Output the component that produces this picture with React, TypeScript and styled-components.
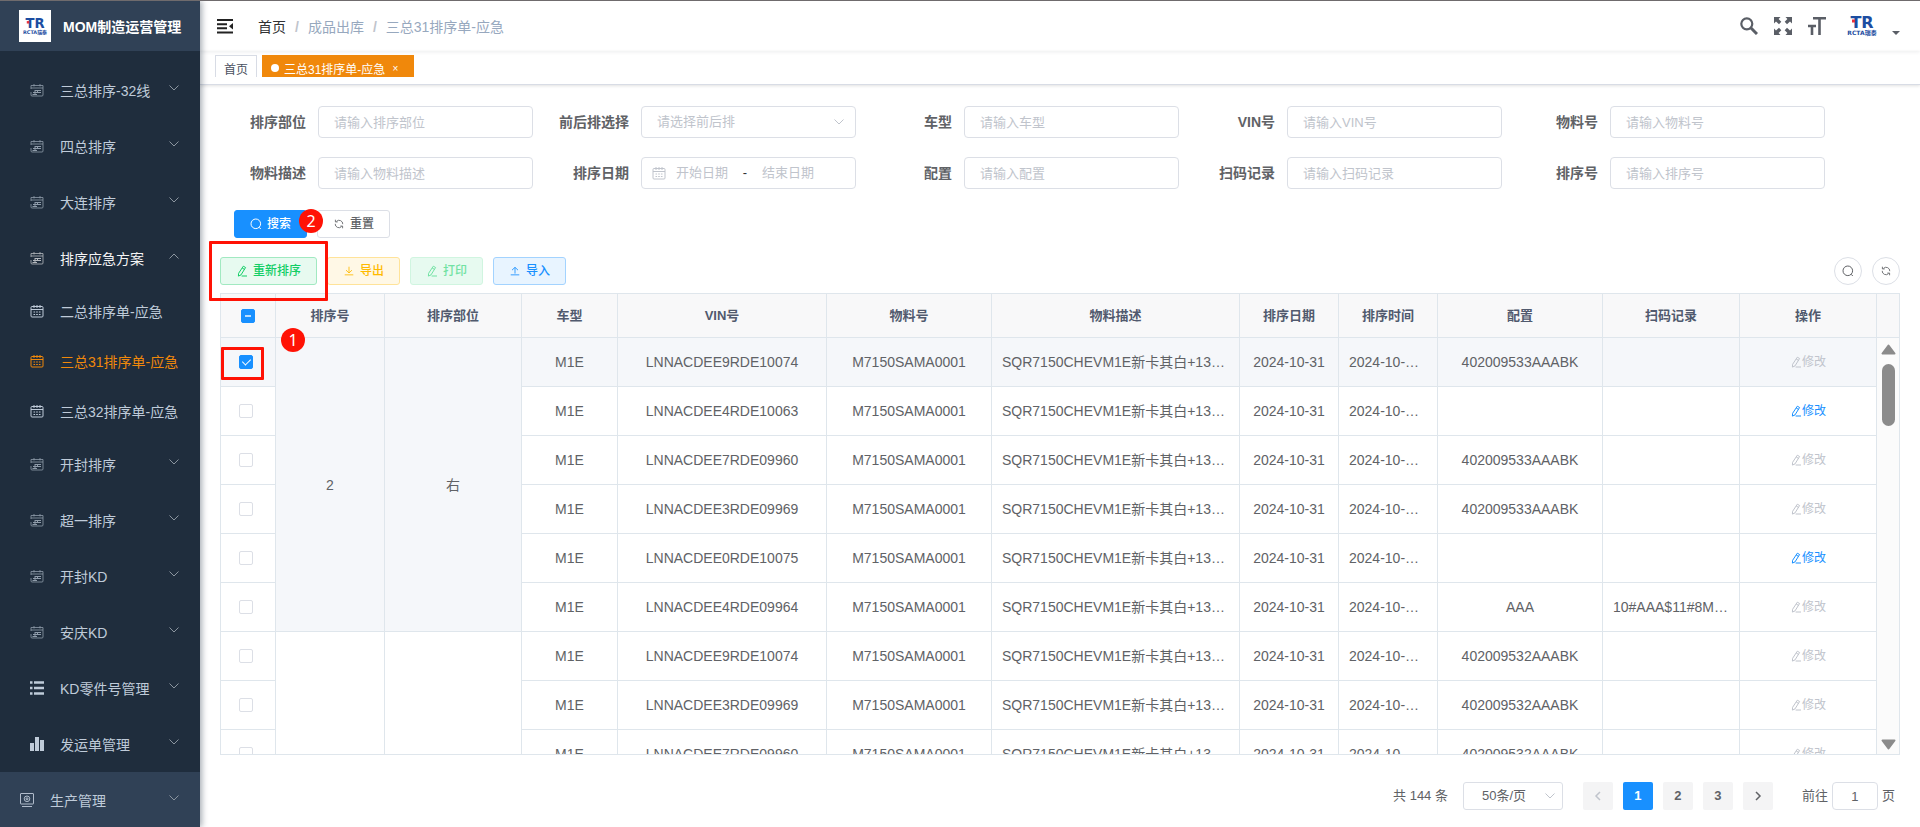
import React from 'react';
import styled, { createGlobalStyle, css } from 'styled-components';

const GlobalStyle = createGlobalStyle`
  *, *::before, *::after { box-sizing: border-box; }
  body {
    margin: 0;
    background: #fff;
    color: #606266;
    font-family: "Liberation Sans", "Noto Sans CJK SC", sans-serif;
    font-size: 14px;
  }
  button, input, select { font-family: inherit; line-height: inherit; margin: 0; }
  a { color: inherit; text-decoration: none; }
`;

/* ---------- icons ---------- */

const Svg = styled.svg<{ $size?: number }>`
  display: block;
  flex: none;
  width: ${p => p.$size ?? 12}px;
  height: ${p => p.$size ?? 12}px;
  fill: none;
  stroke: currentColor;
`;

type IconProps = { size?: number };

const SearchIcon = ({ size }: IconProps) => (
  <Svg $size={size} viewBox="0 0 12 12"><circle cx="5.8" cy="5.8" r="4.8" /><path d="M9 9.2l1.8 1.8" /></Svg>
);
const RefreshIcon = ({ size }: IconProps) => (
  <Svg $size={size} viewBox="-1 -1 14 14">
    <path d="M3 3A4.3 4.3 0 0 1 10.4 6.2M9 9A4.3 4.3 0 0 1 1.6 5.8" />
    <path d="M1.8 1v2.6h2.6M10.2 11V8.400H7.600" />
  </Svg>
);
const EditIcon = ({ size }: IconProps) => (
  <Svg $size={size} viewBox="0 0 12 12">
    <path d="M7.300 1.200l2.300 1.300-4.600 7.400-2.600 1.200.2-2.800zM6.200 3l2.300 1.400M5.600 11H11" />
  </Svg>
);
const DownloadIcon = () => (
  <Svg viewBox="-1 -1 14 14"><path d="M6 1v7M2.500 5L6 8.300 9.500 5M1 10.500h10" /></Svg>
);
const UploadIcon = () => (
  <Svg viewBox="-1 -1 14 14"><path d="M6 9V2M2.500 5L6 1.700 9.500 5M1 10.500h10" /></Svg>
);
const CalendarIcon = ({ size }: IconProps) => (
  <Svg $size={size} viewBox="0 0 14 14">
    <rect x="1" y="2.500" width="12" height="10.500" rx="1" />
    <path d="M1 5.500h12M4 1v3M10 1v3M7 1v3" />
    <path d="M3.500 8h7M3.500 10.500h7" strokeDasharray="1.600 1.100" />
  </Svg>
);
const ScheduleIcon = () => (
  <Svg $size={14} viewBox="0 0 14 14" opacity="0.7">
    <path d="M1 6V2.500h12V12q0 1-1 1H2q-1 0-1-1V9M1 5h12M4 1v2.500M10 1v2.500" strokeWidth="0.800" />
    <path d="M5 7.500h6M3 9.500h8M2.500 11.500h4.500M5 7v5M7.500 7v3" />
  </Svg>
);
const ListIcon = () => (
  <Svg $size={14} viewBox="0 0 14 14" strokeWidth="2.600">
    <path d="M0 1.500h2.500M4 1.500h10M0 7h2.500M4 7h10M0 12.500h2.500M4 12.500h10" />
  </Svg>
);
const BarsIcon = () => (
  <Svg $size={14} viewBox="0 0 14 14" strokeWidth="4"><path d="M2 14V6M7 14V0M12 14V3" /></Svg>
);
const MachineIcon = () => (
  <Svg $size={14} viewBox="0 0 14 14" strokeWidth="0.900">
    <rect x="0.500" y="0.500" width="13" height="10.500" rx="0.500" />
    <circle cx="7" cy="5.800" r="2.800" /><circle cx="7" cy="5.800" r="1" /><path d="M2 13.500h10" />
  </Svg>
);
const Chevron = ({ up, size }: { up?: boolean; size?: number }) => (
  <Svg $size={size} viewBox="0 0 12 12"><path d={up ? 'M1.500 8.500L6 4l4.500 4.500' : 'M1.500 3.500L6 8l4.500-4.500'} /></Svg>
);
const FoldIcon = () => (
  <Svg $size={16} viewBox="0 0 16 16" strokeWidth="2">
    <path d="M0 2h16M0 6.300h10M0 10.300h10M0 14.500h16" />
    <path d="M16 5v6.500l-4-3.200z" fill="currentColor" stroke="none" />
  </Svg>
);
const MagnifierIcon = () => (
  <Svg $size={18} viewBox="0 0 18 18"><circle cx="6.800" cy="6.800" r="5.500" strokeWidth="2.200" /><path d="M11 11l6 6" strokeWidth="3" /></Svg>
);
const FullscreenIcon = () => (
  <Svg $size={18} viewBox="0 0 18 18">
    <path d="M0 0h6.500L4.600 1.900 7.300 4.800 5 7.200 2 4.400 0 6.400zM18 0v6.400l-2-2-3 2.800-2.300-2.400 2.700-2.900L11.500 0zM0 18v-6.400l2 2 3-2.800 2.300 2.400-2.700 2.900L6.500 18zM18 18h-6.500l1.900-1.900-2.700-2.900 2.300-2.400 3 2.800 2-2z" fill="currentColor" stroke="none" />
  </Svg>
);
const TextSizeIcon = () => (
  <Svg $size={18} viewBox="0 0 18 18"><path d="M5 1.300h13M11.500 1v17" strokeWidth="2.600" /><path d="M0 9h8M4 9v9" strokeWidth="2.600" /></Svg>
);

const LogoSvg = styled.svg<{ $width: number }>`
  display: block;
  width: ${p => p.$width}px;
  overflow: visible;
  fill: #1c4da1;
  font-family: "DejaVu Sans", "Noto Sans CJK SC", sans-serif;
  font-weight: 700;
`;
const BrandMark = ({ width }: { width: number }) => (
  <LogoSvg $width={width} viewBox="0 0 34 18" aria-hidden="true">
    <text x="17" y="11" fontSize="16" textAnchor="middle">TR</text>
    <rect x="7" y="2.500" width="3" height="3" fill="#e8323c" />
    <text x="17" y="18" fontSize="6" textAnchor="middle">RCTA瑞泰</text>
  </LogoSvg>
);

/* ---------- shell ---------- */

const Shell = styled.div`
  display: flex;
  height: 100vh;
  border-top: 1px solid #6f6b6d;
  overflow: hidden;
`;

const Sidebar = styled.aside`
  position: relative;
  z-index: 3;
  flex: none;
  width: 200px;
  background: #1f2d3d;
  color: #bfcbd9;
  box-shadow: 2px 0 6px rgba(0, 21, 41, 0.35);
`;
const Brand = styled.div`
  display: flex;
  align-items: center;
  gap: 12px;
  height: 50px;
  padding-left: 19px;
  background: #304156;
`;
const BrandTile = styled.div`
  display: grid;
  place-items: center;
  width: 32px;
  height: 32px;
  background: #fff;
`;
const BrandName = styled.h1`
  margin: 0;
  color: #fff;
  font-size: 14px;
  font-weight: 700;
  white-space: nowrap;
`;
const Menu = styled.nav`padding-top: 11px;`;
const MenuItem = styled.a<{ $kind: 'group' | 'leaf' | 'root'; $tone?: 'active' | 'open' }>`
  display: flex;
  align-items: center;
  gap: 16px;
  height: ${p => (p.$kind === 'leaf' ? 50 : 56)}px;
  padding: 0 20px 0 ${p => (p.$kind === 'root' ? 20 : 30)}px;
  background: ${p => (p.$kind === 'root' ? '#304156' : 'transparent')};
  color: ${p => (p.$tone === 'active' ? '#f0880b' : p.$tone === 'open' ? '#f4f4f5' : '#bfcbd9')};
  white-space: nowrap;
`;
const MenuText = styled.span`flex: 1;`;
const MenuArrow = styled.span`
  padding-bottom: 4px;
  color: #8b959f;
`;

const Main = styled.div`
  display: flex;
  flex: 1;
  flex-direction: column;
  min-width: 0;
`;
const Navbar = styled.header`
  display: flex;
  align-items: center;
  flex: none;
  height: 50px;
  padding: 0 20px 0 17px;
  box-shadow: 0 1px 4px rgba(0, 21, 41, 0.08);
`;
const PlainButton = styled.button`
  display: flex;
  align-items: center;
  padding: 0;
  border: 0;
  background: none;
  color: #5a5e66;
  cursor: pointer;
`;
const FoldButton = styled(PlainButton)`color: #222;`;
const Crumbs = styled.nav`
  display: flex;
  flex: 1;
  align-items: baseline;
  gap: 9px;
  margin-left: 25px;
  color: #97a8be;
  a { color: #303133; }
`;
const Slash = styled.span`
  color: #c0c4cc;
  font-weight: 700;
`;
const NavTools = styled.div`
  display: flex;
  align-items: center;
  gap: 16px;
`;
const UserButton = styled(PlainButton)`
  gap: 13px;
  margin-left: 3px;
`;
const Caret = styled.span`
  align-self: flex-end;
  width: 8px;
  height: 4px;
  background: #5a5e66;
  clip-path: polygon(0 0, 100% 0, 50% 100%);
`;

const TagsBar = styled.nav`
  flex: none;
  height: 34px;
  padding: 4px 15px 7px;
  border-bottom: 1px solid #d8dce5;
  box-shadow: 0 1px 3px rgba(0, 0, 0, 0.12);
`;
const TagsTrack = styled.div`
  display: flex;
  align-items: flex-start;
  gap: 5px;
  height: 22px;
  overflow: hidden;
`;
const Tag = styled.a<{ $active?: boolean }>`
  display: flex;
  align-items: center;
  flex: none;
  gap: 5px;
  height: 26px;
  padding: 0 8px;
  border: 1px solid ${p => (p.$active ? '#f0880b' : '#d8dce5')};
  background: ${p => (p.$active ? '#f0880b' : '#fff')};
  color: ${p => (p.$active ? '#fff' : '#495060')};
  font-size: 12px;
  ${p => p.$active && css`
    &::before {
      content: "";
      width: 8px;
      height: 8px;
      border-radius: 50%;
      background: #fff;
    }
  `}
`;
const TagClose = styled.span`
  width: 10px;
  margin-right: 5px;
  font-size: 10px;
  text-align: center;
`;

const Content = styled.main`
  flex: 1;
  min-height: 0;
  padding: 21px 20px 0;
  line-height: 18px;
`;

/* ---------- filters ---------- */

const Filters = styled.form`
  display: flex;
  flex-wrap: wrap;
  gap: 19px 10px;
`;
const Field = styled.div`
  display: flex;
  align-items: center;
  width: 313px;
`;
const FieldLabel = styled.label`
  width: 98px;
  padding-right: 12px;
  font-weight: 700;
  text-align: right;
`;
const box = css`
  height: 32px;
  border: 1px solid #dcdfe6;
  border-radius: 4px;
  background: #fff;
  color: #606266;
  font-size: 13px;
  outline: 0;
`;
const TextInput = styled.input`
  ${box}
  flex: 1;
  min-width: 0;
  padding: 0 15px;
  &::placeholder { color: #c0c4cc; opacity: 1; }
`;
const SelectWrap = styled.div`
  display: grid;
  flex: 1;
  align-items: center;
  color: #c0c4cc;
  & > * { grid-area: 1 / 1; }
  & > svg {
    justify-self: end;
    margin-right: 11px;
    pointer-events: none;
  }
`;
const Select = styled.select`
  ${box}
  width: 100%;
  padding: 0 15px;
  appearance: none;
  color: #c0c4cc;
`;
const DateRange = styled.div`
  ${box}
  display: flex;
  flex: 1;
  align-items: center;
  min-width: 0;
  padding: 0 10px;
  color: #c0c4cc;
`;
const DateInput = styled.input`
  width: 72px;
  padding: 0;
  border: 0;
  background: none;
  font-size: 13px;
  text-align: center;
  outline: 0;
  &::placeholder { color: #c0c4cc; opacity: 1; }
`;
const RangeDash = styled.span`
  width: 14px;
  color: #303133;
  text-align: center;
`;

/* ---------- buttons ---------- */

const tones = {
  primary: ['#1890ff', '#1890ff', '#fff'],
  plain: ['#fff', '#dcdfe6', '#606266'],
  green: ['#e7faf0', '#a1e9c1', '#13ce66'],
  amber: ['#fff8e6', '#ffe399', '#ffba00'],
  pale: ['#e7faf0', '#d0f5e0', '#71e2a3'],
  blue: ['#e8f4ff', '#a3d3ff', '#1890ff'],
};
const Button = styled.button<{ $tone: keyof typeof tones }>`
  display: flex;
  align-items: center;
  gap: 5px;
  height: 28px;
  padding: 0 15px;
  border: 1px solid ${p => tones[p.$tone][1]};
  border-radius: 3px;
  background: ${p => tones[p.$tone][0]};
  color: ${p => tones[p.$tone][2]};
  font-size: 12px;
  font-weight: 500;
  cursor: pointer;
`;
const SearchRow = styled.div`
  display: flex;
  gap: 10px;
  margin-top: 21px;
  padding-left: 14px;
`;
const Toolbar = styled.div`
  display: flex;
  gap: 10px;
  margin: 19px 0 8px;
`;
const ToolbarEnd = styled.div`
  display: flex;
  gap: 10px;
  margin-left: auto;
`;
const RoundButton = styled.button`
  display: grid;
  place-items: center;
  width: 28px;
  height: 28px;
  padding: 0;
  border: 1px solid #dcdfe6;
  border-radius: 50%;
  background: #fff;
  color: #606266;
`;

/* ---------- step markers ---------- */

const Anchor = styled.div`position: relative;`;
const Outline = styled.div<{ $x: number; $y: number; $w: number; $h: number }>`
  position: absolute;
  z-index: 2;
  left: ${p => p.$x}px;
  top: ${p => p.$y}px;
  width: ${p => p.$w}px;
  height: ${p => p.$h}px;
  border: 3px solid #ff1205;
  border-radius: 1px;
  pointer-events: none;
`;
const Step = styled.div<{ $x: number; $y: number }>`
  position: absolute;
  z-index: 2;
  left: ${p => p.$x}px;
  top: ${p => p.$y}px;
  width: 24px;
  height: 24px;
  border-radius: 50%;
  background: #ff1205;
  color: #fff;
  font-family: "Noto Sans", sans-serif;
  font-size: 16px;
  line-height: 24px;
  text-align: center;
`;

/* ---------- table ---------- */

const TableFrame = styled.div`
  display: flex;
  height: 462px;
  border: 1px solid #dfe6ec;
`;
const TableScroll = styled.div`
  flex: 1;
  min-width: 0;
  overflow: hidden;
`;
const Table = styled.table`
  width: 100%;
  min-width: 1656px;
  border-collapse: separate;
  border-spacing: 0;
  table-layout: fixed;
`;
const cell = css`
  padding: 0 10px;
  border-right: 1px solid #dfe6ec;
  border-bottom: 1px solid #dfe6ec;
  text-align: center;
`;
const Th = styled.th`
  ${cell}
  height: 44px;
  background: #f8f8f9;
  color: #515a6e;
  font-size: 13px;
  font-weight: 700;
`;
const Td = styled.td<{ $lit?: boolean; $cut?: boolean }>`
  ${cell}
  height: 49px;
  overflow: hidden;
  background: ${p => (p.$lit ? '#f5f7fa' : '#fff')};
  white-space: nowrap;
  ${p => p.$cut && css`text-align: left;`}
`;
const CheckTd = styled(Td)`
  position: relative;
  padding: 0 14px 0 10px;
  overflow: visible;
`;
const Check = styled.input`
  display: grid;
  place-content: center;
  width: 14px;
  height: 14px;
  margin: 0 auto;
  border: 1px solid #dcdfe6;
  border-radius: 2px;
  background: #fff;
  appearance: none;
  &:checked { border-color: #1890ff; background: #1890ff; }
  &:checked::after {
    content: "";
    width: 5px;
    height: 8px;
    margin-bottom: 2px;
    border: solid #fff;
    border-width: 0 1px 1px 0;
    transform: rotate(45deg);
  }
`;
const PartialCheck = styled(Check)`
  &:checked::after {
    width: 6px;
    height: 2px;
    margin: 0;
    border: 0;
    background: #fff;
    opacity: 0.7;
    transform: none;
  }
`;
const EditButton = styled.button`
  display: flex;
  align-items: center;
  margin: 0 auto;
  padding: 0;
  border: 0;
  background: none;
  color: #1890ff;
  font-size: 12px;
  &:disabled { color: #c0c4cc; }
`;
const Gutter = styled.div`
  display: flex;
  flex: none;
  flex-direction: column;
  width: 22px;
`;
const GutterHead = styled.div`
  height: 44px;
  border-bottom: 1px solid #dfe6ec;
  background: #f8f8f9;
`;
const Track = styled.div`
  display: flex;
  flex: 1;
  flex-direction: column;
  align-items: center;
  gap: 9px;
  padding: 6px 0 4px 1px;
  background: #fbfbfb;
  color: #8b8b8b;
`;
const Thumb = styled.div`
  width: 13px;
  height: 62px;
  margin-bottom: auto;
  border-radius: 7px;
  background: #8b8b8b;
`;
const ScrollArrow = ({ down }: { down?: boolean }) => (
  <svg width="15" height="11" viewBox="0 0 15 11" aria-hidden="true">
    <path
      d={down ? 'M1.500 1.500h12L7.500 9.500z' : 'M1.500 9.500h12L7.500 1.500z'}
      fill="currentColor" stroke="currentColor" strokeWidth="2" strokeLinejoin="round"
    />
  </svg>
);

/* ---------- pagination ---------- */

const Pager = styled.nav`
  display: flex;
  align-items: center;
  justify-content: flex-end;
  gap: 10px;
  margin-top: 27px;
  padding-right: 5px;
  font-size: 13px;
`;
const PagerSelectWrap = styled(SelectWrap)`
  flex: none;
  width: 100px;
  margin: 0 10px 0 5px;
  & > svg { margin-right: 7px; }
`;
const PagerSelect = styled(Select)`
  height: 28px;
  padding: 0 18px;
  border-radius: 3px;
  color: #606266;
`;
const PageButton = styled.button<{ $current?: boolean }>`
  display: grid;
  place-items: center;
  width: 30px;
  height: 28px;
  padding: 0;
  border: 0;
  border-radius: 2px;
  background: ${p => (p.$current ? '#1890ff' : '#f4f4f5')};
  color: ${p => (p.$current ? '#fff' : '#606266')};
  font-size: 13px;
  font-weight: 700;
  &:disabled { color: #c0c4cc; }
`;
const Jump = styled.label`
  display: flex;
  align-items: center;
  gap: 4px;
  margin-left: 19px;
`;
const JumpInput = styled.input`
  ${box}
  width: 46px;
  height: 28px;
  padding: 0;
  text-align: center;
`;
const Arrow = ({ left }: { left?: boolean }) => (
  <Svg viewBox="0 0 12 12" strokeWidth="1.500"><path d={left ? 'M8 2L4 6l4 4' : 'M4 2l4 4-4 4'} /></Svg>
);

/* ---------- data ---------- */

type Item = { text: string; icon: React.ReactNode; kind: 'group' | 'leaf' | 'root'; tone?: 'active' | 'open' };
const sched = <ScheduleIcon />;
const cal = <CalendarIcon size={14} />;
const menu: Item[] = [
  { text: '三总排序-32线', icon: sched, kind: 'group' },
  { text: '四总排序', icon: sched, kind: 'group' },
  { text: '大连排序', icon: sched, kind: 'group' },
  { text: '排序应急方案', icon: sched, kind: 'group', tone: 'open' },
  { text: '二总排序单-应急', icon: cal, kind: 'leaf' },
  { text: '三总31排序单-应急', icon: cal, kind: 'leaf', tone: 'active' },
  { text: '三总32排序单-应急', icon: cal, kind: 'leaf' },
  { text: '开封排序', icon: sched, kind: 'group' },
  { text: '超一排序', icon: sched, kind: 'group' },
  { text: '开封KD', icon: sched, kind: 'group' },
  { text: '安庆KD', icon: sched, kind: 'group' },
  { text: 'KD零件号管理', icon: <ListIcon />, kind: 'group' },
  { text: '发运单管理', icon: <BarsIcon />, kind: 'group' },
  { text: '生产管理', icon: <MachineIcon />, kind: 'root' },
];

const fields = ['排序部位', '前后排选择', '车型', 'VIN号', '物料号', '物料描述', '排序日期', '配置', '扫码记录', '排序号'];
const widths = [55, 109, 137, 96, 209, 165, 248, 99, 99, 165, 137, 137];
const heads = ['排序号', '排序部位', '车型', 'VIN号', '物料号', '物料描述', '排序日期', '排序时间', '配置', '扫码记录', '操作'];

const rows: { vin: string; config: string; scan?: string; editable?: boolean }[] = [
  { vin: 'LNNACDEE9RDE10074', config: '402009533AAABK' },
  { vin: 'LNNACDEE4RDE10063', config: '', editable: true },
  { vin: 'LNNACDEE7RDE09960', config: '402009533AAABK' },
  { vin: 'LNNACDEE3RDE09969', config: '402009533AAABK' },
  { vin: 'LNNACDEE0RDE10075', config: '', editable: true },
  { vin: 'LNNACDEE4RDE09964', config: 'AAA', scan: '10#AAA$11#8M…' },
  { vin: 'LNNACDEE9RDE10074', config: '402009532AAABK' },
  { vin: 'LNNACDEE3RDE09969', config: '402009532AAABK' },
  { vin: 'LNNACDEE7RDE09960', config: '402009532AAABK' },
];

function FieldControl({ name, id }: { name: string; id: string }) {
  if (name === '前后排选择') {
    return (
      <SelectWrap>
        <Select id={id} defaultValue=""><option value="">请选择前后排</option></Select>
        <Chevron />
      </SelectWrap>
    );
  }
  if (name === '排序日期') {
    return (
      <DateRange>
        <CalendarIcon size={14} />
        <DateInput id={id} placeholder="开始日期" />
        <RangeDash>-</RangeDash>
        <DateInput aria-label="结束日期" placeholder="结束日期" />
      </DateRange>
    );
  }
  return <TextInput id={id} placeholder={`请输入${name}`} />;
}

export default function App() {
  return (
    <>
      <GlobalStyle />
      <Shell>
        <Sidebar>
          <Brand>
            <BrandTile><BrandMark width={28} /></BrandTile>
            <BrandName>MOM制造运营管理</BrandName>
          </Brand>
          <Menu>
            {menu.map(m => (
              <MenuItem key={m.text} href="#" $kind={m.kind} $tone={m.tone}>
                {m.icon}
                <MenuText>{m.text}</MenuText>
                {m.kind !== 'leaf' && <MenuArrow><Chevron up={m.tone === 'open'} /></MenuArrow>}
              </MenuItem>
            ))}
          </Menu>
        </Sidebar>

        <Main>
          <Navbar>
            <FoldButton type="button" aria-label="折叠菜单"><FoldIcon /></FoldButton>
            <Crumbs>
              <a href="#">首页</a>
              <Slash>/</Slash>
              <span>成品出库</span>
              <Slash>/</Slash>
              <span>三总31排序单-应急</span>
            </Crumbs>
            <NavTools>
              <PlainButton type="button" aria-label="搜索"><MagnifierIcon /></PlainButton>
              <PlainButton type="button" aria-label="全屏"><FullscreenIcon /></PlainButton>
              <PlainButton type="button" aria-label="字号"><TextSizeIcon /></PlainButton>
              <UserButton type="button" aria-label="用户"><BrandMark width={34} /><Caret /></UserButton>
            </NavTools>
          </Navbar>

          <TagsBar>
            <TagsTrack>
              <Tag href="#">首页</Tag>
              <Tag href="#" $active>三总31排序单-应急<TagClose>×</TagClose></Tag>
            </TagsTrack>
          </TagsBar>

          <Content>
            <Filters>
              {fields.map((name, i) => (
                <Field key={name}>
                  <FieldLabel htmlFor={`f${i}`}>{name}</FieldLabel>
                  <FieldControl name={name} id={`f${i}`} />
                </Field>
              ))}
            </Filters>

            <SearchRow>
              <Anchor>
                <Button type="button" $tone="primary"><SearchIcon />搜索</Button>
                <Step $x={65} $y={-1}>2</Step>
              </Anchor>
              <Button type="button" $tone="plain"><RefreshIcon />重置</Button>
            </SearchRow>

            <Toolbar>
              <Anchor>
                <Button type="button" $tone="green"><EditIcon />重新排序</Button>
                <Outline $x={-11} $y={-16} $w={119} $h={60} />
              </Anchor>
              <Button type="button" $tone="amber"><DownloadIcon />导出</Button>
              <Button type="button" $tone="pale"><EditIcon />打印</Button>
              <Button type="button" $tone="blue"><UploadIcon />导入</Button>
              <ToolbarEnd>
                <RoundButton type="button" aria-label="显示搜索"><SearchIcon /></RoundButton>
                <RoundButton type="button" aria-label="刷新"><RefreshIcon /></RoundButton>
              </ToolbarEnd>
            </Toolbar>

            <TableFrame>
              <TableScroll>
                <Table>
                  <colgroup>{widths.map((w, i) => <col key={i} width={w} />)}</colgroup>
                  <thead>
                    <tr>
                      <Th><PartialCheck type="checkbox" aria-label="全选" defaultChecked /></Th>
                      {heads.map(h => <Th key={h}>{h}</Th>)}
                    </tr>
                  </thead>
                  <tbody>
                    {rows.map((r, i) => {
                      const lit = i === 0;
                      return (
                        <tr key={i}>
                          <CheckTd $lit={lit}>
                            <Check type="checkbox" aria-label={`选择 ${r.vin}`} defaultChecked={lit} />
                            {lit && <Outline $x={0} $y={9} $w={43} $h={33} />}
                            {lit && <Step $x={60} $y={-10}>1</Step>}
                          </CheckTd>
                          {i === 0 && <Td $lit rowSpan={6}>2</Td>}
                          {i === 0 && <Td $lit rowSpan={6}>右</Td>}
                          {i === 6 && <Td rowSpan={3} />}
                          {i === 6 && <Td rowSpan={3} />}
                          <Td $lit={lit}>M1E</Td>
                          <Td $lit={lit}>{r.vin}</Td>
                          <Td $lit={lit}>M7150SAMA0001</Td>
                          <Td $lit={lit} $cut>SQR7150CHEVM1E新卡其白+13…</Td>
                          <Td $lit={lit}>2024-10-31</Td>
                          <Td $lit={lit} $cut>2024-10-…</Td>
                          <Td $lit={lit}>{r.config}</Td>
                          <Td $lit={lit} $cut>{r.scan}</Td>
                          <Td $lit={lit}>
                            <EditButton type="button" disabled={!r.editable}><EditIcon />修改</EditButton>
                          </Td>
                        </tr>
                      );
                    })}
                  </tbody>
                </Table>
              </TableScroll>
              <Gutter>
                <GutterHead />
                <Track>
                  <ScrollArrow />
                  <Thumb />
                  <ScrollArrow down />
                </Track>
              </Gutter>
            </TableFrame>

            <Pager>
              <span>共 144 条</span>
              <PagerSelectWrap>
                <PagerSelect aria-label="每页条数"><option>50条/页</option></PagerSelect>
                <Chevron />
              </PagerSelectWrap>
              <PageButton type="button" disabled aria-label="上一页"><Arrow left /></PageButton>
              <PageButton type="button" $current>1</PageButton>
              <PageButton type="button">2</PageButton>
              <PageButton type="button">3</PageButton>
              <PageButton type="button" aria-label="下一页"><Arrow /></PageButton>
              <Jump>前往<JumpInput defaultValue="1" />页</Jump>
            </Pager>
          </Content>
        </Main>
      </Shell>
    </>
  );
}
